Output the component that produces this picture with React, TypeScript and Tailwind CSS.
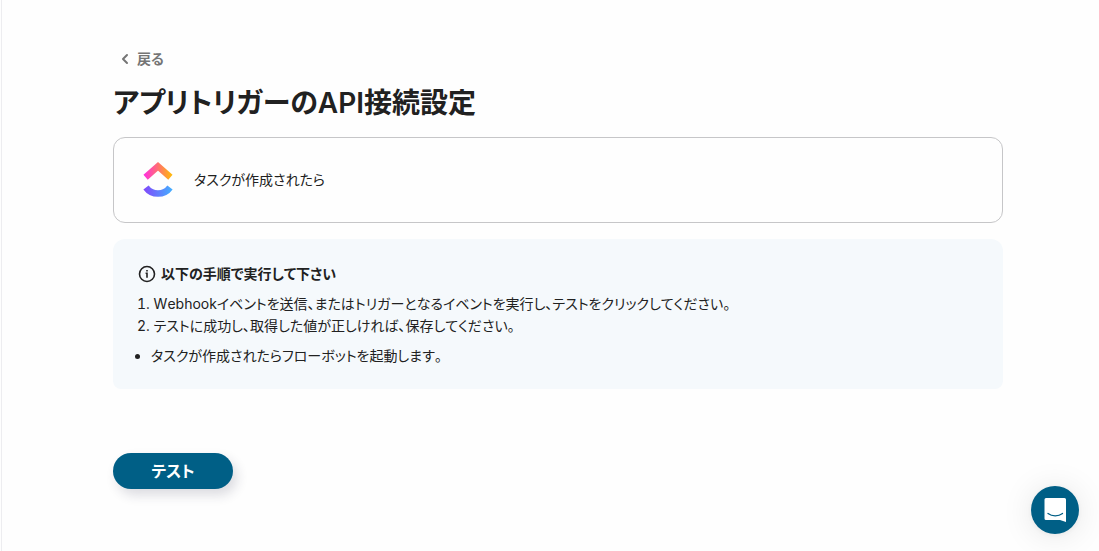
import { ChevronLeft } from "lucide-react";

const steps = [
  "Webhookイベントを送信、またはトリガーとなるイベントを実行し、テストをクリックしてください。",
  "テストに成功し、取得した値が正しければ、保存してください。",
];

function ClickUpLogo() {
  return (
    <svg className="w-9 h-9" viewBox="0 0 36 36" fill="none" aria-hidden="true">
      <defs>
        <linearGradient id="roof" x1="4" y1="0" x2="32" y2="0" gradientUnits="userSpaceOnUse">
          <stop offset="0" stopColor="#ff2fe0" />
          <stop offset="0.5" stopColor="#ff7071" />
          <stop offset="1" stopColor="#ffba08" />
        </linearGradient>
        <linearGradient id="smile" x1="4" y1="0" x2="32" y2="0" gradientUnits="userSpaceOnUse">
          <stop offset="0" stopColor="#8149fb" />
          <stop offset="1" stopColor="#44aeff" />
        </linearGradient>
      </defs>
      <path d="M5.600 15.200 18 4.400l12.400 10.800" stroke="url(#roof)" strokeWidth="6.500" />
      <path d="M6 25.500C9 29.600 13 31.600 18 31.600s9-2 12-6.100" stroke="url(#smile)" strokeWidth="6.500" />
    </svg>
  );
}

function InfoIcon() {
  return (
    <svg className="w-5 h-5" viewBox="0 0 20 20" fill="none" stroke="currentColor" strokeWidth="1.600" aria-hidden="true">
      <circle cx="10" cy="10" r="7.500" />
      <path d="M8.600 9.300H10v4.500M10 6v1.600" />
    </svg>
  );
}

export default function App() {
  return (
    <div className="min-h-screen pl-px bg-[#fefefe] text-[#212121] text-sm font-['Inter','Noto_Sans_CJK_JP',sans-serif] [font-feature-settings:'palt'] [font-kerning:none]">
      <main lang="ja" className="min-h-screen border-l border-[#ededf0] pl-[111px] pr-24 pt-[47px]">
        {/* Page header */}
        <a href="#" className="flex w-fit items-center gap-1 pl-1 h-6 font-semibold text-[#757575]">
          <ChevronLeft className="w-4 h-4" strokeWidth={3} />
          戻る
        </a>
        <h1 className="mt-3.5 mb-[15px] text-[28px] leading-[37px] font-semibold">
          アプリトリガーのAPI接続設定
        </h1>

        {/* Selected trigger */}
        <section className="flex items-center gap-[18px] h-[86px] pl-[26px] rounded-xl border border-[#c6c6c8]">
          <ClickUpLogo />
          <p>タスクが作成されたら</p>
        </section>

        {/* Instructions */}
        <section className="mt-4 px-6 pt-6 pb-[22px] rounded-t-xl rounded-b-lg bg-[#f5f9fc]">
          <h2 className="flex items-center gap-1 mb-2 leading-[22px] font-semibold">
            <InfoIcon />
            以下の手順で実行して下さい
          </h2>
          <ol className="list-decimal list-inside leading-[22px]">
            {steps.map((step) => (
              <li key={step}>{step}</li>
            ))}
          </ol>
          <ul className="mt-2 pl-[14px] list-disc leading-[22px]">
            <li>タスクが作成されたらフローボットを起動します。</li>
          </ul>
        </section>

        <button
          type="button"
          className="mt-16 w-[120px] h-9 rounded-full bg-[#005f86] text-white text-base font-bold shadow-[4px_6px_12px_rgba(40,40,70,0.16)]"
        >
          テスト
        </button>
      </main>

      {/* Chat launcher */}
      <button
        type="button"
        aria-label="チャットを開く"
        className="fixed right-5 bottom-[17px] w-12 h-12 rounded-full bg-[#005f86] flex items-center justify-center shadow-[0_1px_6px_rgba(0,0,0,0.06),0_2px_32px_rgba(0,0,0,0.1)]"
      >
        <svg className="w-6 h-7" viewBox="0 0 24 28" fill="none" aria-hidden="true">
          <path d="M3 2h18.500a1.500 1.500 0 0 1 1.500 1.500v22.500l-6-2H3a1.500 1.500 0 0 1-1.500-1.500v-19A1.500 1.500 0 0 1 3 2z" fill="#fff" />
          <path d="M5 17.500c4 3.100 10.500 3.100 14.500 0" stroke="#005f86" strokeWidth="1.300" strokeLinecap="round" />
        </svg>
      </button>
    </div>
  );
}
